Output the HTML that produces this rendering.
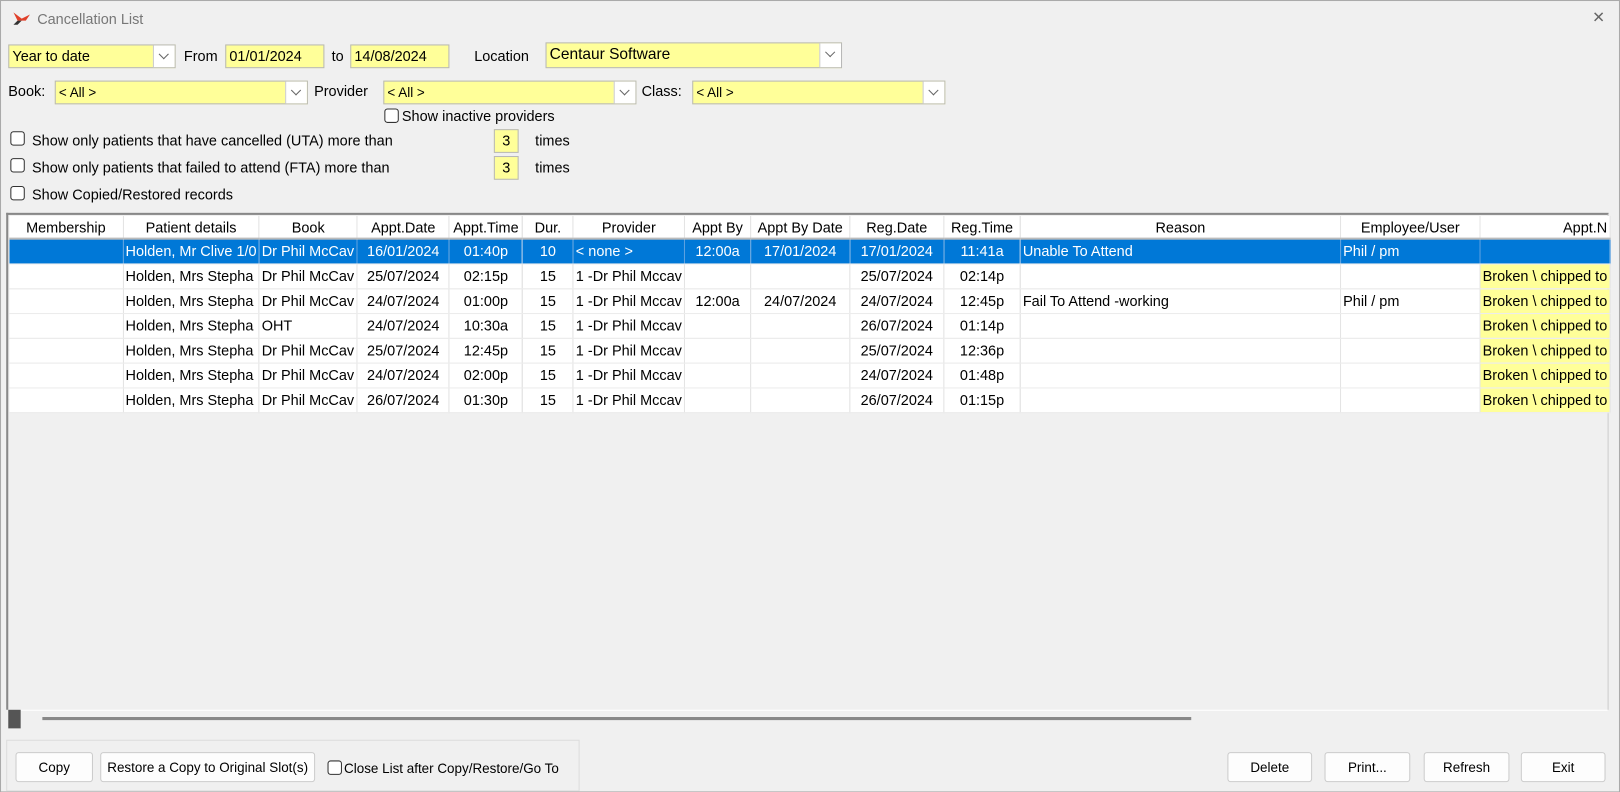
<!DOCTYPE html>
<html><head><meta charset="utf-8"><style>
*{box-sizing:border-box;margin:0;padding:0}
html,body{width:1620px;height:792px;overflow:hidden;background:#f0f0f0}
#w{width:1568px;height:767px;transform:scale(1.03316);transform-origin:0 0;background:#f0f0f0;font-family:"Liberation Sans",Arial,sans-serif;font-size:14px;color:#000;position:relative;overflow:hidden;border:1px solid #aaa}
.a{position:absolute;white-space:nowrap}
.y{position:absolute;background:#ffff99;border:1px solid #b8b8b8;height:23px;line-height:21px;padding-left:3px;font-size:14px}
.dd{position:absolute;right:0;top:0;width:21px;height:21px;background:#fff;border-left:1px solid #ccc}
.dd:after{content:"";position:absolute;left:6px;top:5px;width:6px;height:6px;border-right:1px solid #666;border-bottom:1px solid #666;transform:rotate(45deg)}
.cb{position:absolute;width:14px;height:14px;border:1px solid #333;border-radius:3px;background:#fff}
.btn{position:absolute;background:#fdfdfd;border:1px solid #ccc;border-radius:3px;height:29px;line-height:27px;text-align:center;font-size:13px}
table{position:absolute;left:8px;top:208px;border-collapse:collapse;font-size:14px;table-layout:fixed}
td,th{height:24px;border-right:1px solid #e4e4e4;border-bottom:1px solid #ececec;white-space:nowrap;overflow:hidden;padding:0 2px;background:#fff;font-weight:normal}
th{height:22px;background:#fff;border-bottom:2px solid #bbb;text-align:center}
tr.s td{background:#0078d7;color:#fff;border-right-color:#5aa0e0}
td.c{text-align:center}
td.yl{background:#ffff99}
</style></head><body><div id="w">
<svg class="a" style="left:10px;top:9px" width="20" height="16" viewBox="0 0 20 16"><path d="M2 2 L10 8 L18 4 L14 10 L6 10Z" fill="#e0402a"/><path d="M2 14 L6 10 L10 10 L6 14Z" fill="#333"/></svg>
<div class="a" style="left:35px;top:9px;color:#777;font-size:14px">Cancellation List</div>
<div class="a" style="left:1540px;top:7px;color:#666;font-size:15px">✕</div>

<div class="y" style="left:7px;top:42px;width:162px">Year to date<span class="dd"></span></div>
<div class="a" style="left:177px;top:45px">From</div>
<div class="y" style="left:217px;top:42px;width:96px">01/01/2024</div>
<div class="a" style="left:320px;top:45px">to</div>
<div class="y" style="left:338px;top:42px;width:96px">14/08/2024</div>
<div class="a" style="left:458px;top:45px">Location</div>
<div class="y" style="left:527px;top:40px;width:287px;height:25px;font-size:15px">Centaur Software<span class="dd" style="height:23px"></span></div>

<div class="a" style="left:7px;top:79px">Book:</div>
<div class="y" style="left:52px;top:77px;width:245px;font-size:13px">&lt; All &gt;<span class="dd"></span></div>
<div class="a" style="left:303px;top:79px">Provider</div>
<div class="y" style="left:370px;top:77px;width:245px;font-size:13px">&lt; All &gt;<span class="dd"></span></div>
<div class="a" style="left:620px;top:79px">Class:</div>
<div class="y" style="left:669px;top:77px;width:245px;font-size:13px">&lt; All &gt;<span class="dd"></span></div>

<div class="cb" style="left:371px;top:104px"></div>
<div class="a" style="left:388px;top:103px">Show inactive providers</div>
<div class="cb" style="left:9px;top:126px"></div>
<div class="a" style="left:30px;top:127px">Show only patients that have cancelled (UTA) more than</div>
<div class="y" style="left:477px;top:124px;width:24px;text-align:center;padding:0">3</div>
<div class="a" style="left:517px;top:127px">times</div>
<div class="cb" style="left:9px;top:152px"></div>
<div class="a" style="left:30px;top:153px">Show only patients that failed to attend (FTA) more than</div>
<div class="y" style="left:477px;top:150px;width:24px;text-align:center;padding:0">3</div>
<div class="a" style="left:517px;top:153px">times</div>
<div class="cb" style="left:9px;top:179px"></div>
<div class="a" style="left:30px;top:179px">Show Copied/Restored records</div>

<div class="a" style="left:5px;top:205px;width:1551px;height:481px;border-top:2px solid #888;border-left:2px solid #888;border-right:1px solid #ccc;background:#f0f0f0"></div>
<table>
<colgroup><col style="width:110px"><col style="width:131px"><col style="width:95px"><col style="width:89px"><col style="width:71px"><col style="width:49px"><col style="width:105px"><col style="width:64px"><col style="width:96px"><col style="width:91px"><col style="width:74px"><col style="width:310px"><col style="width:135px"><col style="width:125px"></colgroup>
<tr><th>Membership</th><th>Patient details</th><th>Book</th><th>Appt.Date</th><th>Appt.Time</th><th>Dur.</th><th>Provider</th><th>Appt By</th><th>Appt By Date</th><th>Reg.Date</th><th>Reg.Time</th><th>Reason</th><th>Employee/User</th><th style="text-align:right">Appt.N</th></tr>
<tr class="s"><td></td><td>Holden, Mr Clive 1/0</td><td>Dr Phil McCav</td><td class="c">16/01/2024</td><td class="c">01:40p</td><td class="c">10</td><td>&lt; none &gt;</td><td class="c">12:00a</td><td class="c">17/01/2024</td><td class="c">17/01/2024</td><td class="c">11:41a</td><td>Unable To Attend</td><td>Phil / pm</td><td></td></tr>
<tr><td></td><td>Holden, Mrs Stepha</td><td>Dr Phil McCav</td><td class="c">25/07/2024</td><td class="c">02:15p</td><td class="c">15</td><td>1 -Dr Phil Mccav</td><td></td><td></td><td class="c">25/07/2024</td><td class="c">02:14p</td><td></td><td></td><td class="yl">Broken \ chipped to</td></tr>
<tr><td></td><td>Holden, Mrs Stepha</td><td>Dr Phil McCav</td><td class="c">24/07/2024</td><td class="c">01:00p</td><td class="c">15</td><td>1 -Dr Phil Mccav</td><td class="c">12:00a</td><td class="c">24/07/2024</td><td class="c">24/07/2024</td><td class="c">12:45p</td><td>Fail To Attend -working</td><td>Phil / pm</td><td class="yl">Broken \ chipped to</td></tr>
<tr><td></td><td>Holden, Mrs Stepha</td><td>OHT</td><td class="c">24/07/2024</td><td class="c">10:30a</td><td class="c">15</td><td>1 -Dr Phil Mccav</td><td></td><td></td><td class="c">26/07/2024</td><td class="c">01:14p</td><td></td><td></td><td class="yl">Broken \ chipped to</td></tr>
<tr><td></td><td>Holden, Mrs Stepha</td><td>Dr Phil McCav</td><td class="c">25/07/2024</td><td class="c">12:45p</td><td class="c">15</td><td>1 -Dr Phil Mccav</td><td></td><td></td><td class="c">25/07/2024</td><td class="c">12:36p</td><td></td><td></td><td class="yl">Broken \ chipped to</td></tr>
<tr><td></td><td>Holden, Mrs Stepha</td><td>Dr Phil McCav</td><td class="c">24/07/2024</td><td class="c">02:00p</td><td class="c">15</td><td>1 -Dr Phil Mccav</td><td></td><td></td><td class="c">24/07/2024</td><td class="c">01:48p</td><td></td><td></td><td class="yl">Broken \ chipped to</td></tr>
<tr><td></td><td>Holden, Mrs Stepha</td><td>Dr Phil McCav</td><td class="c">26/07/2024</td><td class="c">01:30p</td><td class="c">15</td><td>1 -Dr Phil Mccav</td><td></td><td></td><td class="c">26/07/2024</td><td class="c">01:15p</td><td></td><td></td><td class="yl">Broken \ chipped to</td></tr>
</table>
<div class="a" style="left:7px;top:686px;width:1548px;height:16px;background:#f0f0f0;border-top:1px solid #fff"></div>
<div class="a" style="left:7px;top:686px;width:12px;height:18px;background:#555"></div>
<div class="a" style="left:40px;top:693px;width:1112px;height:3px;background:#888"></div>

<div class="a" style="left:5px;top:715px;width:555px;height:50px;border:1px solid #ddd"></div>
<div class="btn" style="left:14px;top:727px;width:75px">Copy</div>
<div class="btn" style="left:96px;top:727px;width:208px">Restore a Copy to Original Slot(s)</div>
<div class="cb" style="left:316px;top:735px"></div>
<div class="a" style="left:332px;top:735px;font-size:13px">Close List after Copy/Restore/Go To</div>
<div class="btn" style="left:1187px;top:727px;width:82px">Delete</div>
<div class="btn" style="left:1281px;top:727px;width:83px">Print...</div>
<div class="btn" style="left:1377px;top:727px;width:83px">Refresh</div>
<div class="btn" style="left:1471px;top:727px;width:82px">Exit</div>
</div></body></html>
